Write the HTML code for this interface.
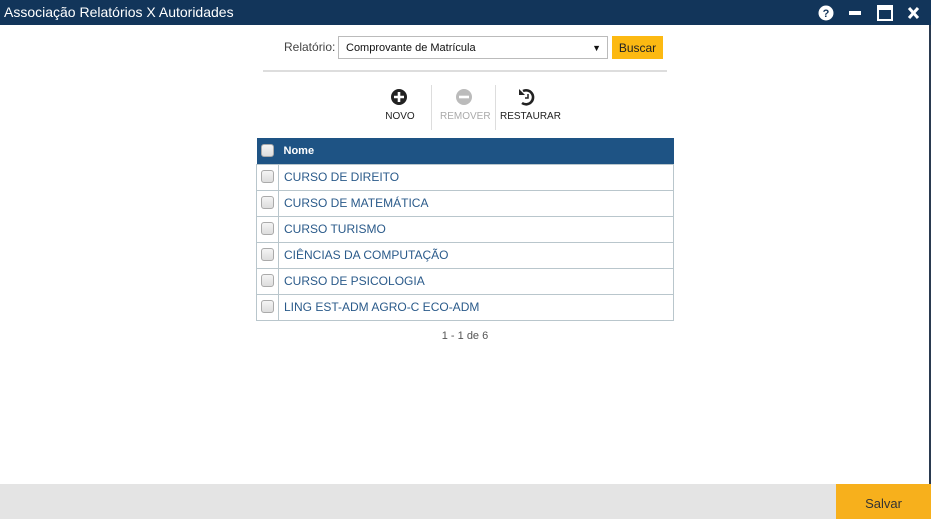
<!DOCTYPE html>
<html><head><meta charset="utf-8"><style>
*{margin:0;padding:0;box-sizing:border-box}
body{width:931px;height:519px;position:relative;background:#fff;font-family:"Liberation Sans",sans-serif;overflow:hidden}
.title{position:absolute;left:0;top:0;width:931px;height:25px;background:#12355a;color:#fff;font-size:14px;line-height:25px;padding-left:4px}
.rb{position:absolute;right:0;top:25px;width:2px;height:459px;background:#2a3a50}
.abs{position:absolute}
.lbl{left:284px;top:40px;font-size:12px;color:#444}
.sel{left:338px;top:36px;width:270px;height:23px;border:1px solid #bbb;font-size:11px;line-height:23px;padding-left:7px;color:#111}
.btn{left:612px;top:36px;width:51px;height:23px;background:#fcb912;font-size:12px;line-height:24px;text-align:center;color:#222}
.hr{left:263px;top:70px;width:404px;height:2px;background:#ddd}
.tb{font-size:10px;text-align:center}
table{position:absolute;left:256px;top:138px;width:418px;border-collapse:collapse;font-size:12px}
th{background:#1e5384;color:#fff;height:26px;text-align:left;font-size:11px}
td{height:26px;border:1px solid #b9c6cc;color:#2a5a8a}
td:first-child,th:first-child{width:22px;padding-left:4px}
td:nth-child(2),th:nth-child(2){padding-left:5px}
td:first-child{vertical-align:top;padding-top:4px}
.cb{display:inline-block;width:13px;height:13px;border:1px solid #aaa;border-radius:3px;background:linear-gradient(#f4f4f4,#ddd);vertical-align:middle}
.foot{left:0;top:484px;width:931px;height:35px;background:#e4e4e4}
.salvar{left:836px;top:484px;width:95px;height:35px;background:#f7b01c;color:#333;font-size:13px;line-height:40px;text-align:center}
</style></head><body>
<div class="title">Associação Relatórios X Autoridades</div>
<svg class="abs" style="left:818px;top:4px" width="106" height="18">
<circle cx="8" cy="9" r="7.5" fill="#fff"/><text x="8" y="13" font-size="11" font-weight="bold" text-anchor="middle" fill="#12355a" font-family="Liberation Sans">?</text>
<rect x="31" y="7" width="12" height="4" fill="#fff"/>
<rect x="60" y="2" width="14" height="14" fill="none" stroke="#fff" stroke-width="2"/><rect x="60" y="2" width="14" height="4" fill="#fff"/>
<path d="M91 4 L100 14 M100 4 L91 14" stroke="#fff" stroke-width="3"/>
</svg>
<div class="rb"></div>
<div class="abs lbl">Relatório:</div>
<div class="abs sel">Comprovante de Matrícula<span style="position:absolute;right:6px;top:0;font-size:9px">▼</span></div>
<div class="abs btn">Buscar</div>
<div class="abs hr"></div>
<svg class="abs" style="left:390px;top:88px" width="150" height="18">
<circle cx="9" cy="9" r="8" fill="#222"/><path d="M9 4v10M4 9h10" stroke="#fff" stroke-width="2.6"/>
<circle cx="74" cy="9" r="8" fill="#bbb"/><path d="M69 9h10" stroke="#fff" stroke-width="2.6"/>
<path d="M133 3 A7 7 0 1 1 132 15" fill="none" stroke="#222" stroke-width="2.6"/><path d="M129 1 v6 h6z" fill="#222"/><path d="M138 6v4h-3" stroke="#222" stroke-width="1.5" fill="none"/>
</svg>
<div class="abs" style="left:431px;top:85px;width:1px;height:45px;background:#ddd"></div>
<div class="abs" style="left:495px;top:85px;width:1px;height:45px;background:#ddd"></div>
<div class="abs tb" style="left:380px;top:111px;width:40px;color:#222">NOVO</div>
<div class="abs tb" style="left:440px;top:111px;width:50px;color:#aaa">REMOVER</div>
<div class="abs tb" style="left:500px;top:111px;width:60px;color:#222">RESTAURAR</div>
<table>
<tr><th><span class="cb"></span></th><th>Nome</th></tr>
<tr><td><span class="cb"></span></td><td>CURSO DE DIREITO</td></tr>
<tr><td><span class="cb"></span></td><td>CURSO DE MATEMÁTICA</td></tr>
<tr><td><span class="cb"></span></td><td>CURSO TURISMO</td></tr>
<tr><td><span class="cb"></span></td><td>CIÊNCIAS DA COMPUTAÇÃO</td></tr>
<tr><td><span class="cb"></span></td><td>CURSO DE PSICOLOGIA</td></tr>
<tr><td><span class="cb"></span></td><td>LING EST-ADM AGRO-C ECO-ADM</td></tr>
</table>
<div class="abs" style="left:256px;top:330px;width:418px;text-align:center;font-size:11px;color:#555">1 - 1 de 6</div>
<div class="abs foot"></div>
<div class="abs salvar">Salvar</div>
</body></html>
